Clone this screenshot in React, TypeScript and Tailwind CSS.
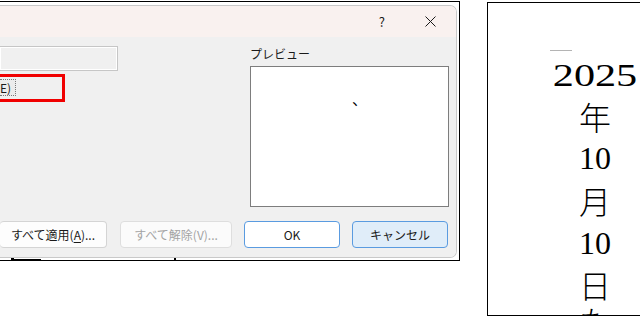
import React from "react";

const jp = { fontFamily: '"Noto Sans CJK JP", "Noto Sans", sans-serif' };

function Btn({
  children,
  className,
}: {
  children: React.ReactNode;
  className: string;
}) {
  return (
    <div
      className={
        "h-[27px] flex items-center rounded-[4px] border text-[12px] leading-none " +
        className
      }
    >
      {children}
    </div>
  );
}

export default function App() {
  const kanji = "text-[32px] leading-none font-light text-black";
  const digits = "text-[32px] leading-none text-black";
  return (
    <div className="w-[640px] h-[319px] bg-white overflow-hidden flex items-start" style={jp}>
      {/* Left: dialog screenshot frame */}
      <div className="w-[460px] shrink-0">
        <div className="relative mt-[1px] h-[260px] border-t border-r border-b border-black pt-[3px] pr-[2px]">
          <div className="h-[253px] rounded-tr-[7px] rounded-br-[7px] border-t border-r border-b border-[#c9c9c9] overflow-hidden flex flex-col">
            {/* Title bar */}
            <div className="h-[31px] bg-[#f9f1ef] flex items-center justify-end text-[#1a1a1a]">
              <span className="text-[13px] leading-none mr-[40px]">?</span>
              <svg width="11" height="11" viewBox="0 0 11 11" className="mr-[20px]">
                <path d="M0.5 0.5 L10.5 10.5 M10.5 0.5 L0.5 10.5" stroke="#1a1a1a" strokeWidth="1" />
              </svg>
            </div>
            {/* Body */}
            <div className="flex-1 bg-[#f0f0f0] flex flex-col">
              <div className="flex">
                <div className="w-[250px] pt-[9px] flex flex-col">
                  <div className="w-[118px] h-[25px] border border-l-0 border-[#c6c6c6] bg-[#f0f0f0] shadow-[inset_0_0_0_1px_#ffffff]" />
                  <div className="mt-[3px] w-[65px] h-[28px] border-[3px] border-l-0 border-[#f00000] pt-[2px]">
                    <div className="w-[16px] h-[17px] border border-l-0 border-dotted border-[#7a7a7a] bg-[#ececec] flex items-center text-[12px] leading-none text-[#1a1a1a] overflow-hidden">
                      <span className="underline underline-offset-2">E</span>
                      <span>)</span>
                    </div>
                  </div>
                </div>
                <div className="w-[199px] pt-[9px] flex flex-col">
                  <div className="h-[16px] text-[12px] leading-[16px] text-[#1a1a1a]">プレビュー</div>
                  <div className="mt-[4px] h-[141px] border border-[#7d7d7d] bg-white relative">
                    <span className="absolute left-[101px] top-[24px] text-[15px] leading-none text-black">、</span>
                  </div>
                </div>
              </div>
              <div className="mt-[14px] flex text-[#1a1a1a]">
                <Btn className="w-[107px] border-l-0 border-[#d4d4d4] bg-[#fdfdfd] justify-end pr-[11px]">
                  すべて適用(<span className="underline underline-offset-2">A</span>)...
                </Btn>
                <Btn className="ml-[13px] w-[112px] border-[#dedede] bg-[#fbfbfb] justify-center text-[#a3a3a3]">
                  すべて解除(V)...
                </Btn>
                <Btn className="ml-[12px] w-[96px] border-[#5a9be0] bg-white justify-center">
                  OK
                </Btn>
                <Btn className="ml-[12px] w-[96px] border-[#5a9be0] bg-[#e0edf9] justify-center">
                  キャンセル
                </Btn>
              </div>
            </div>
          </div>
          {/* ruler ticks behind the dialog */}
          <div className="absolute left-[11px] bottom-0 w-[3px] h-[2px] bg-black" />
          <div className="absolute left-[14px] bottom-0 w-[27px] h-px bg-black" />
          <div className="absolute left-[174px] bottom-0 w-[2px] h-[2px] bg-black" />
        </div>
      </div>

      {/* Right: vertical document page */}
      <div className="ml-[27px] mt-[2px] w-[180px] h-[314px] shrink-0 border-l border-t border-b border-black bg-white overflow-hidden">
        <div className="ml-[57px] w-[100px] pt-[47px] flex flex-col items-center">
          <div className="self-start ml-[5px] w-[22px] h-px bg-[#b4b4b4]" />
          <div className="mt-[4px] h-[40px] flex items-center justify-center" style={{ fontFamily: '"Liberation Serif", serif' }}>
            <span className={"inline-block scale-x-[1.32] " + digits}>2025</span>
          </div>
          <div className={"h-[42px] flex items-center justify-center " + kanji}>年</div>
          <div className={"h-[42px] flex items-center justify-center " + digits} style={{ fontFamily: '"Liberation Serif", serif' }}>10</div>
          <div className={"h-[42px] flex items-center justify-center " + kanji}>月</div>
          <div className={"h-[43px] flex items-center justify-center " + digits} style={{ fontFamily: '"Liberation Serif", serif' }}>10</div>
          <div className={"h-[40px] flex items-center justify-center " + kanji}>日</div>
          <div className={"h-[32px] flex items-start justify-center " + kanji}>た</div>
        </div>
      </div>
    </div>
  );
}
